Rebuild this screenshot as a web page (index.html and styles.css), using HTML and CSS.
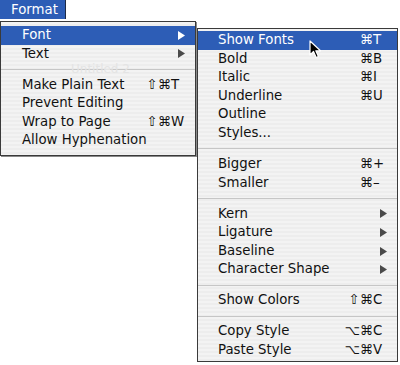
FILE: index.html
```html
<!DOCTYPE html>
<html>
<head>
<meta charset="utf-8">
<link rel="stylesheet" href="styles.css">
</head>
<body>
<div class="screen">
  <div class="left">
    <div class="title">Format</div>
    <div class="menu main">
      <div class="ghost">Untitled 2</div>
      <div class="item sel"><span class="label">Font</span><span class="mods"></span><span class="key"><svg class="arrow" width="7" height="9" viewBox="0 0 7 9"><path d="M0 0L7 4.5L0 9Z"/></svg></span></div>
      <div class="item"><span class="label">Text</span><span class="mods"></span><span class="key"><svg class="arrow" width="7" height="9" viewBox="0 0 7 9"><path d="M0 0L7 4.5L0 9Z"/></svg></span></div>
      <div class="sep"></div>
      <div class="item"><span class="label">Make Plain Text</span><span class="mods">⇧⌘</span><span class="key">T</span></div>
      <div class="item"><span class="label">Prevent Editing</span><span class="mods"></span><span class="key"></span></div>
      <div class="item"><span class="label">Wrap to Page</span><span class="mods">⇧⌘</span><span class="key">W</span></div>
      <div class="item"><span class="label">Allow Hyphenation</span><span class="mods"></span><span class="key"></span></div>
    </div>
  </div>
  <div class="menu sub">
    <div class="item sel"><span class="label">Show Fonts</span><span class="mods">⌘</span><span class="key">T</span></div>
    <div class="item"><span class="label">Bold</span><span class="mods">⌘</span><span class="key">B</span></div>
    <div class="item"><span class="label">Italic</span><span class="mods">⌘</span><span class="key">I</span></div>
    <div class="item"><span class="label">Underline</span><span class="mods">⌘</span><span class="key">U</span></div>
    <div class="item"><span class="label">Outline</span><span class="mods"></span><span class="key"></span></div>
    <div class="item"><span class="label">Styles...</span><span class="mods"></span><span class="key"></span></div>
    <div class="sep"></div>
    <div class="item"><span class="label">Bigger</span><span class="mods">⌘</span><span class="key">+</span></div>
    <div class="item"><span class="label">Smaller</span><span class="mods">⌘</span><span class="key">–</span></div>
    <div class="sep"></div>
    <div class="item"><span class="label">Kern</span><span class="mods"></span><span class="key"><svg class="arrow" width="7" height="9" viewBox="0 0 7 9"><path d="M0 0L7 4.5L0 9Z"/></svg></span></div>
    <div class="item"><span class="label">Ligature</span><span class="mods"></span><span class="key"><svg class="arrow" width="7" height="9" viewBox="0 0 7 9"><path d="M0 0L7 4.5L0 9Z"/></svg></span></div>
    <div class="item"><span class="label">Baseline</span><span class="mods"></span><span class="key"><svg class="arrow" width="7" height="9" viewBox="0 0 7 9"><path d="M0 0L7 4.5L0 9Z"/></svg></span></div>
    <div class="item"><span class="label">Character Shape</span><span class="mods"></span><span class="key"><svg class="arrow" width="7" height="9" viewBox="0 0 7 9"><path d="M0 0L7 4.5L0 9Z"/></svg></span></div>
    <div class="sep"></div>
    <div class="item"><span class="label">Show Colors</span><span class="mods">⇧⌘</span><span class="key">C</span></div>
    <div class="sep"></div>
    <div class="item"><span class="label">Copy Style</span><span class="mods">⌥⌘</span><span class="key">C</span></div>
    <div class="item"><span class="label">Paste Style</span><span class="mods">⌥⌘</span><span class="key">V</span></div>
    <svg class="cursor" width="13" height="19" viewBox="0 0 13 19"><path d="M1 1L1 15L4.5 11.5L7.2 17.5L9.4 16.5L6.8 10.8L11.5 10.8Z" fill="#000" stroke="#fff" stroke-width="1.2" stroke-linejoin="round"/></svg>
  </div>
</div>
</body>
</html>
```

FILE: styles.css
```css
html, body {
  margin: 0;
  padding: 0;
  background: #ffffff;
}

body {
  font-family: "DejaVu Sans", "Liberation Sans", sans-serif;
  font-size: 13.3px;
  color: #111111;
}

.screen {
  display: flex;
  align-items: flex-start;
  width: 400px;
  height: 365px;
  overflow: hidden;
}

.left {
  width: 197px;
  flex: none;
}

.title {
  box-sizing: border-box;
  width: 66px;
  height: 19px;
  line-height: 19px;
  padding-left: 11px;
  background: #2d5db6;
  color: #ffffff;
  border-right: 1px solid #1e2a44;
}

.menu {
  box-sizing: border-box;
  position: relative;
  border: 1px solid #3a3a3a;
  background: repeating-linear-gradient(to bottom, #f3f3f3 0, #f3f3f3 2px, #ededed 2px, #ededed 4px);
}

.main {
  width: 196px;
  margin-top: 2px;
  padding: 4px 0 5px;
  box-shadow: 1px 1px 0 #8a8a8a;
}

.sub {
  width: 201px;
  margin-top: 28px;
  padding: 2px 0 2px;
  flex: none;
}

.item {
  position: relative;
  display: grid;
  grid-template-columns: 1fr auto 14px;
  height: 18.6px;
  line-height: 18.6px;
  padding: 0 10px 0 21px;
  white-space: nowrap;
}

.sub .item {
  padding-left: 20px;
}

.item.sel {
  background: #2d5db6;
  color: #ffffff;
}

.mods {
  text-align: right;
}

.key {
  display: flex;
  align-items: center;
  justify-content: flex-start;
}

.arrow {
  margin-left: auto;
  fill: #4a4a4a;
}

.sel .arrow {
  fill: #ffffff;
}

.sep {
  height: 12.4px;
  display: flex;
  align-items: center;
}

.sep::before {
  content: "";
  display: block;
  width: 100%;
  height: 1px;
  background: #c6c6c6;
}

.ghost {
  position: absolute;
  left: 70px;
  top: 40px;
  font-size: 12px;
  color: #e4e4e4;
}

.cursor {
  position: absolute;
  left: 111px;
  top: 11px;
}
```
